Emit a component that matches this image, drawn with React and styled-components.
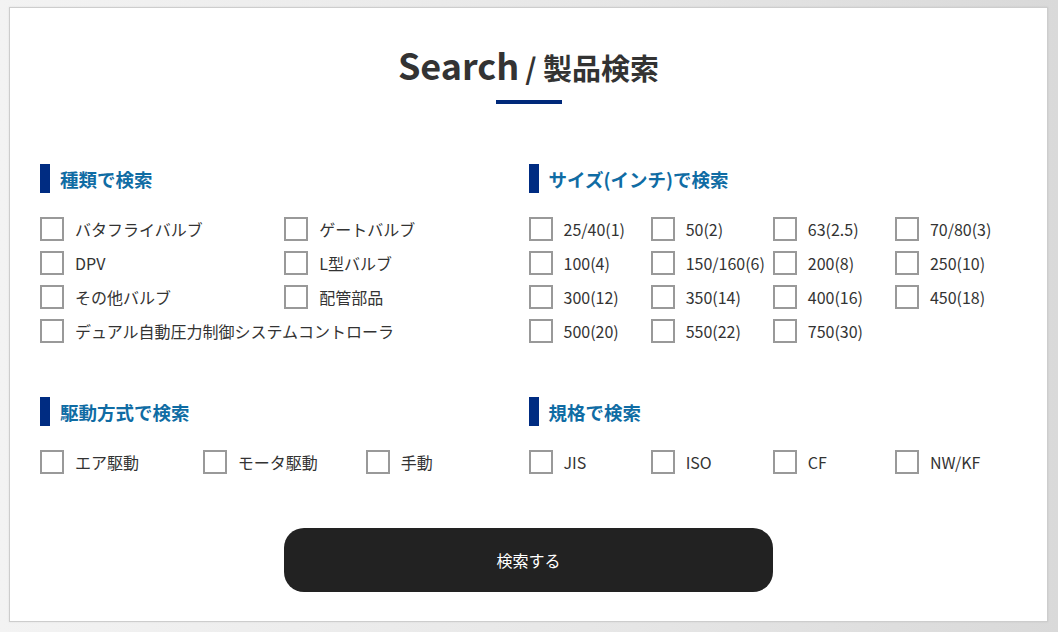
import React from "react";
import styled, { createGlobalStyle } from "styled-components";

const GlobalStyle = createGlobalStyle`
  html, body { margin: 0; padding: 0; height: 100%; }
  body {
    background: linear-gradient(90deg, #f3f3f3 0%, #e6e6e6 60%, #d9d9d9 100%);
    font-family: "Noto Sans CJK JP", "Noto Sans", sans-serif;
    color: #333;
  }
  * { box-sizing: border-box; }
`;

const Page = styled.div`
  padding: 7px 10px 10px 9px;
`;

const Card = styled.section`
  background: #fff;
  border: 1px solid #cdcdcd;
  box-shadow: 0 0 2px rgba(0, 0, 0, 0.08);
  height: 615px;
  padding: 36px 30px 29px 30px;
  display: flex;
  flex-direction: column;
  align-items: center;
`;

const Title = styled.h1`
  margin: 0;
  height: 40px;
  font-size: 36px;
  line-height: 40px;
  font-weight: 700;
  color: #333;
  white-space: nowrap;
`;

const TitleSub = styled.span`
  font-size: 29px;
  line-height: 1;
  margin-left: 6px;
`;

const Underline = styled.div`
  flex: none;
  width: 66px;
  height: 4px;
  background: #00297a;
  margin-top: 16px;
`;

const Sections = styled.div`
  align-self: stretch;
  display: grid;
  grid-template-columns: 1fr 1fr;
  row-gap: 54px;
  margin-top: 60px;
`;

const Section = styled.div`
  display: flex;
  flex-direction: column;
  gap: 24px;
`;

const Heading = styled.h2`
  margin: 0;
  display: flex;
  align-items: center;
  gap: 10px;
  height: 29px;
  font-size: 18.5px;
  font-weight: 700;
  color: #0f6ca4;
  &::before {
    content: "";
    width: 10px;
    height: 29px;
    background: #002c82;
  }
`;

const Options = styled.div`
  display: grid;
  grid-template-columns: repeat(${(p) => p.$cols}, 1fr);
  row-gap: 10px;
`;

const Option = styled.label`
  display: flex;
  align-items: center;
  gap: 11px;
  height: 24px;
  font-size: 16px;
  color: #333;
  white-space: nowrap;
  grid-column: ${(p) => (p.$wide ? "1 / -1" : "auto")};
  cursor: pointer;
`;

const Box = styled.span`
  flex: none;
  width: 24px;
  height: 24px;
  border: 2px solid #999;
  background: #fff;
`;

const Button = styled.button`
  flex: none;
  margin-top: 54px;
  width: 489px;
  height: 64px;
  border: none;
  border-radius: 20px;
  background: #222;
  color: #fff;
  font-family: "Noto Sans CJK JP", "Noto Sans", sans-serif;
  font-size: 16px;
  cursor: pointer;
`;

const groups = [
  {
    title: "種類で検索",
    cols: 2,
    items: [
      "バタフライバルブ",
      "ゲートバルブ",
      "DPV",
      "L型バルブ",
      "その他バルブ",
      "配管部品",
      { label: "デュアル自動圧力制御システムコントローラ", wide: true },
    ],
  },
  {
    title: "サイズ(インチ)で検索",
    cols: 4,
    items: [
      "25/40(1)", "50(2)", "63(2.5)", "70/80(3)",
      "100(4)", "150/160(6)", "200(8)", "250(10)",
      "300(12)", "350(14)", "400(16)", "450(18)",
      "500(20)", "550(22)", "750(30)",
    ],
  },
  {
    title: "駆動方式で検索",
    cols: 3,
    items: ["エア駆動", "モータ駆動", "手動"],
  },
  {
    title: "規格で検索",
    cols: 4,
    items: ["JIS", "ISO", "CF", "NW/KF"],
  },
];

export default function App() {
  return (
    <>
      <GlobalStyle />
      <Page>
        <Card>
          <Title>
            Search<TitleSub>/ 製品検索</TitleSub>
          </Title>
          <Underline />
          <Sections>
            {groups.map((g) => (
              <Section key={g.title}>
                <Heading>{g.title}</Heading>
                <Options $cols={g.cols}>
                  {g.items.map((it) => {
                    const label = typeof it === "string" ? it : it.label;
                    const wide = typeof it === "string" ? false : it.wide;
                    return (
                      <Option key={label} $wide={wide}>
                        <Box />
                        {label}
                      </Option>
                    );
                  })}
                </Options>
              </Section>
            ))}
          </Sections>
          <Button>検索する</Button>
        </Card>
      </Page>
    </>
  );
}
